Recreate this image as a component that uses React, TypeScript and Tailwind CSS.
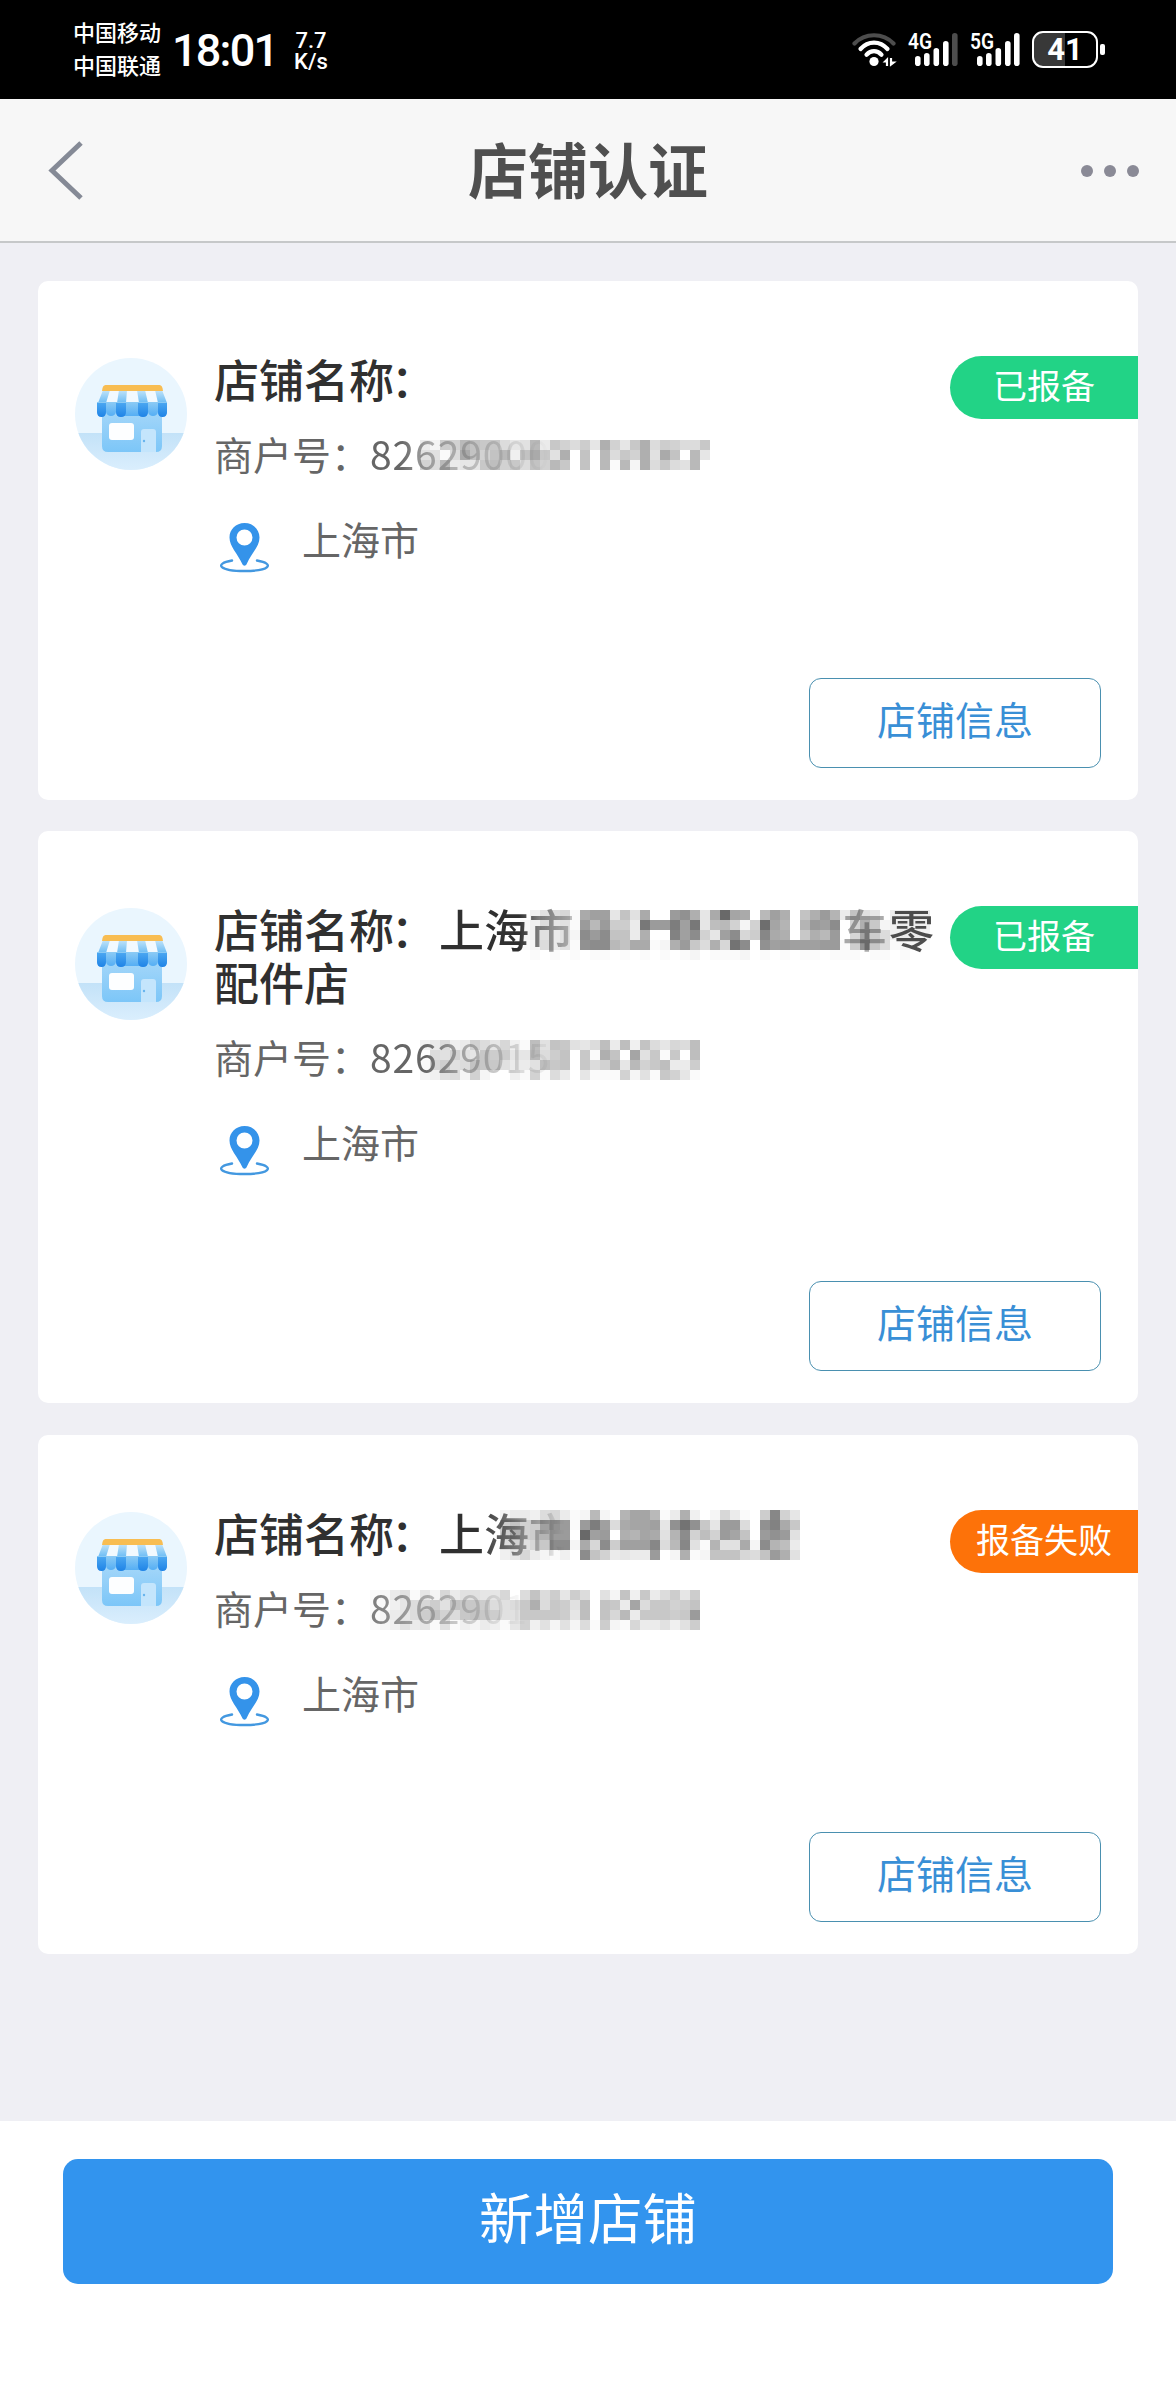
import type { ReactNode } from "react";

/* Each character is the darkness of one 10px cell, in base 36. */
const NUMBER_MASK_1 = [
  "42a9ecbb756e4b97a5g95bg7a977b",
  "6617hc9ce3chb6g0c0e7b9g6hc0e5",
  "97e455bd9b7c9eb0c0e1e2g7b76e0",
];
const NAME_MASK_2 = [
  "036781hjj5c6h00kmg5huih0ejg0cgkf4c6504554",
  "237561kekaa4rkkqjr5de929tif0fkjn09gb23443",
  "236462nkncc4g00pjn95jn8aohg0bgek08ia73442",
  "127461mnnechh12gkb7g8sn0mjkjjjkk1amb71221",
  "01010101101010101201112010101101110110100",
];
const NUMBER_MASK_2 = [
  "34734975831d6cb657d4d3c7587d",
  "076965baa55e7ac0b1gc0i6b1b0d",
  "18a67cbb6446dbc0b79e5e9bd44a",
  "236729200319174051119261b951",
];
const NAME_MASK_3 = [
  "244378412e20fiie14g3028410ao95",
  "ac9ajmk1kqj7hiij5msmb5kk70mphb",
  "ag9afkk0ujk0gfih6fn9d9kic0kmk6",
  "7968bnn2h8najjjo7eo61f66h2nfd4",
  "35842130nc94544k02g12ccc87ckg6",
];
const NUMBER_MASK_3 = [
  "1246152846655807c7a5a7062c3b47a5a",
  "113578a6cbba767bg7ba6d0cb4i7bb9ac",
  "12457ac97bcba66bbbba5d0c8e4bbbabk",
  "12364516132431593626271a21844636a",
];

function Mosaic({ rows, className }: { rows: string[]; className: string }) {
  return (
    <div className={`absolute ${className}`} aria-hidden="true">
      {rows.map((row, y) => (
        <div key={y} className="flex h-[10px]">
          {row.split("").map((c, x) => {
            const g = 255 - 5 * parseInt(c, 36);
            return (
              <span
                key={x}
                className="block h-[10px] w-[10px] shrink-0"
                style={{ backgroundColor: `rgb(${g},${g},${g})` }}
              />
            );
          })}
        </div>
      ))}
    </div>
  );
}

function Signal({ label, dim }: { label: string; dim?: boolean }) {
  const bars = [
    { x: 7, y: 23 },
    { x: 16, y: 20 },
    { x: 25.5, y: 15 },
    { x: 35, y: 8 },
    { x: 44, y: 0 },
  ];
  return (
    <svg width="54" height="44" viewBox="-3 -5 54 44" className="-ml-[3px] -mr-[1px] -mt-[5px]">
      {bars.map((b, i) => (
        <rect
          key={i}
          x={b.x}
          y={b.y + 1}
          width="5.6"
          height={33 - b.y}
          rx="2.8"
          fill={dim && i === 4 ? "#4d4d4d" : "#fff"}
        />
      ))}
      <text
        x="0"
        y="17"
        fill="#fff"
        fontSize="21.5"
        fontWeight="600"
        textLength="24"
        lengthAdjust="spacingAndGlyphs"
        fontFamily="Roboto, sans-serif"
      >
        {label}
      </text>
    </svg>
  );
}

function Wifi() {
  return (
    <svg width="46" height="38" viewBox="0 0 46 38" fill="none" strokeLinecap="round" strokeWidth="4.2">
      <path d="M2.5 11.5C13 .5 31 .5 41.5 11.5" stroke="#4d4d4d" />
      <path d="M8.500 17C16 8.500 28 8.500 35.500 17" stroke="#fff" />
      <path d="M14.500 22.700C19 18 25 18 29.500 22.700" stroke="#fff" />
      <circle cx="22" cy="29.500" r="4.600" fill="#fff" />
      <path d="M35.5 26.500v7h-1v-3.500h-2.500zM38.500 33.500v-7h1v3.500H43z" fill="#fff" stroke="#fff" strokeWidth="1.2" />
    </svg>
  );
}

function StoreIcon() {
  return (
    <svg width="112" height="112" viewBox="0 0 112 112" className="shrink-0">
      <defs>
        <clipPath id="disc">
          <circle cx="56" cy="56" r="56" />
        </clipPath>
        <linearGradient id="body" x1="0" y1="0" x2="0" y2="1">
          <stop offset="0" stopColor="#a3d6f9" />
          <stop offset="1" stopColor="#7cc6f8" />
        </linearGradient>
        <linearGradient id="stripe" x1="0" y1="0" x2="0" y2="1">
          <stop offset="0" stopColor="#c3e4f8" />
          <stop offset="1" stopColor="#6bbcf5" />
        </linearGradient>
        <linearGradient id="light" x1="0" y1="0" x2="0" y2="1">
          <stop offset="0" stopColor="#8ccbf5" />
          <stop offset="1" stopColor="#55aef4" />
        </linearGradient>
        <linearGradient id="dark" x1="0" y1="0" x2="0" y2="1">
          <stop offset="0" stopColor="#4aa6f1" />
          <stop offset="1" stopColor="#1f83e6" />
        </linearGradient>
        <linearGradient id="ground" x1="0" y1="0" x2="0" y2="1">
          <stop offset="0" stopColor="#c3e2f8" />
          <stop offset="1" stopColor="#daeefd" />
        </linearGradient>
      </defs>
      <g clipPath="url(#disc)">
        <rect width="112" height="112" fill="#eaf6fe" />
        <rect y="75" width="112" height="37" fill="url(#ground)" />
      </g>
      <path d="M27 54h60v34q0 6-6 6H33q-6 0-6-6z" fill="url(#body)" />
      <rect x="34" y="65" width="25" height="17" rx="3" fill="#fdfeff" />
      <path d="M66 94V74q0-3 3-3h9q3 0 3 3v20z" fill="#c4e5fc" />
      <circle cx="69" cy="83" r="1.200" fill="#67b4ee" />
      <path d="M28 32h59l5 17H22z" fill="#f2f9fe" />
      <path d="M28 32h7l-4 13h-8zM44 32h8l-1 13h-9zM62 32h8l3 13h-9zM80 32h7l5 13h-9z" fill="url(#stripe)" />
      <path d="M30.500 27h54q3 0 3.500 6H27q.5-6 3.500-6z" fill="#f8bd52" />
      <path d="M22 44h70v9q0 5-4.500 5T83 54q-1 4-5 4t-5-4q-1 4-4 4H46q-4 0-5-4-1 4-5 4t-5-4q-1 4-4.500 4T22 53z" fill="url(#light)" />
      <path d="M22 45h9v9q0 5-4.500 5T22 54zM41 45h10v9q0 5-5 5t-5-5zM63 45h10v9q0 5-5 5t-5-5zM83 45h9v9q0 5-4.500 5T83 54z" fill="url(#dark)" />
    </svg>
  );
}

function Pin() {
  return (
    <svg width="52" height="52" viewBox="0 0 52 52" fill="none">
      <path
        fillRule="evenodd"
        d="M25.500 1C16.800 1 10.500 7.500 10.500 15.500c0 9 8 16 12.800 26.500 1 2.200 3.400 2.200 4.400 0C32.500 31.500 40.500 24.500 40.500 15.500 40.500 7.500 34.200 1 25.500 1zm0 6.500a8 8 0 1 1 0 16 8 8 0 0 1 0-16z"
        fill="#3493ea"
      />
      <path d="M13 38.500C-6 42 1 49 25.500 49S57 42 38 38.500" stroke="#4398e0" strokeWidth="2.400" strokeLinecap="round" />
    </svg>
  );
}

type Store = {
  name: ReactNode;
  merchant: ReactNode;
  status: string;
  failed?: boolean;
};

const nameLabel = (
  <span className="relative">
    店铺名称<span className="-ml-[3px] mr-[3px]">：</span>
  </span>
);

const stores: Store[] = [
  {
    name: nameLabel,
    merchant: (
      <>
        <Mosaic rows={NUMBER_MASK_1} className="left-[206px] top-[15px]" />
        <span className="relative">商户号：</span>
        <span className="relative tracking-[0.9px] [mask-image:linear-gradient(to_right,black_30px,#0008_60px,transparent_180px)]">
          82629000
        </span>
      </>
    ),
    status: "已报备",
  },
  {
    name: (
      <>
        <Mosaic rows={NAME_MASK_2} className="left-[306px] top-[8px]" />
        {nameLabel}
        <span className="relative [mask-image:linear-gradient(to_right,black_80px,#0009_100px,#0004_135px)]">上海市</span>
        <span className="invisible inline-block w-[268px]" />
        <span className="relative mr-[2px] opacity-40">车</span>
        <span className="relative opacity-85">零</span>
        <br />
        配件店
      </>
    ),
    merchant: (
      <>
        <Mosaic rows={NUMBER_MASK_2} className="left-[206px] top-[12px]" />
        <span className="relative">商户号：</span>
        <span className="relative tracking-[0.9px] [mask-image:linear-gradient(to_right,black_55px,#0008_90px,transparent_190px)]">
          82629015
        </span>
      </>
    ),
    status: "已报备",
  },
  {
    name: (
      <>
        <Mosaic rows={NAME_MASK_3} className="left-[286px] top-[4px]" />
        {nameLabel}
        <span className="relative [mask-image:linear-gradient(to_right,black_40px,#0009_75px,transparent_125px)]">上海市</span>
      </>
    ),
    merchant: (
      <>
        <Mosaic rows={NUMBER_MASK_3} className="left-[156px] top-[11px]" />
        <span className="relative">商户号：</span>
        <span className="relative tracking-[0.9px] [mask-image:linear-gradient(to_right,#000d,#0008_45px,transparent_160px)]">
          8262901
        </span>
      </>
    ),
    status: "报备失败",
    failed: true,
  },
];

function StoreCard({ store }: { store: Store }) {
  return (
    <section className="relative rounded-[10px] bg-white px-[37px] pb-[32px] pt-[71px] last:mt-px">
      <div className="flex">
        <div className="pt-[6px]">
          <StoreIcon />
        </div>
        <div className="ml-[27px] whitespace-nowrap">
          <h2 className="relative text-[45px] font-medium leading-[53px] text-[#303030]">{store.name}</h2>
          <p className="relative mt-[20px] h-[56px] text-[39px] leading-[56px] text-[#666]">{store.merchant}</p>
          <div className="mt-[29px] flex h-[56px] items-center">
            <div className="ml-[5px] pt-[20px]">
              <Pin />
            </div>
            <span className="ml-[31px] text-[39px] leading-[56px] text-[#666]">上海市</span>
          </div>
        </div>
      </div>
      <span
        className={`absolute right-0 top-[75px] flex h-[63px] w-[188px] items-center justify-center rounded-l-full pb-[6px] text-[34px] leading-none text-white ${
          store.failed ? "bg-[#fd7209]" : "bg-[#22d386]"
        }`}
      >
        {store.status}
      </span>
      <button className="ml-auto mt-[112px] flex h-[90px] w-[292px] items-center justify-center rounded-[12px] border border-[#4a90b0] pb-[9px] text-[39px] leading-none text-[#398fd6]">
        店铺信息
      </button>
    </section>
  );
}

export default function App() {
  return (
    <div className="flex h-[2400px] w-[1176px] flex-col overflow-hidden bg-[#efeff4] font-['Noto_Sans_CJK_SC',sans-serif]">
      <div className="flex h-[99px] shrink-0 items-start bg-black text-white">
        <div className="ml-[73px] mt-[15px] text-[22px] font-medium leading-[33px]">
          <div>中国移动</div>
          <div>中国联通</div>
        </div>
        <div className="ml-[11px] mt-[26px] w-[106px] font-['Roboto'] text-[45px] font-medium leading-[50px] tracking-[-1.8px]">
          18:01
        </div>
        <div className="ml-[15px] mt-[30px] w-[36px] text-center font-['Roboto'] text-[22px] font-medium leading-[21px]">
          <div>7.7</div>
          <div>K/s</div>
        </div>
        <div className="ml-auto mr-[71px] mt-[32px] flex items-start">
          <Wifi />
          <div className="ml-[10px]">
            <Signal label="4G" dim />
          </div>
          <div className="ml-[12px]">
            <Signal label="5G" />
          </div>
          <div className="ml-[12px] -mt-px flex items-center">
            <div className="flex h-[37px] w-[66px] items-center justify-center rounded-[11px] border-[2.5px] border-white bg-[linear-gradient(to_right,#383838_50%,black_50%)] font-['Roboto'] text-[31px] font-bold leading-none">
              41
            </div>
            <div className="ml-[2px] h-[11px] w-[5px] rounded-[2px] bg-white" />
          </div>
        </div>
      </div>

      <header className="flex h-[144px] shrink-0 items-center border-b-2 border-[#c6c8c9] bg-[#f7f7f7] pl-[48px] pr-[37px]">
        <svg width="60" height="60" viewBox="0 0 60 60" fill="none">
          <path d="M33 3L4 30.500L33 58" stroke="#858a96" strokeWidth="5" />
        </svg>
        <h1 className="ml-[360px] pb-[4px] text-[60px] font-bold leading-none text-[#4f4f4f]">店铺认证</h1>
        <div className="ml-auto flex gap-[11px] pt-[2px]">
          <span className="h-[12px] w-[12px] rounded-full bg-[#8a8a96]" />
          <span className="h-[12px] w-[12px] rounded-full bg-[#8a8a96]" />
          <span className="h-[12px] w-[12px] rounded-full bg-[#8a8a96]" />
        </div>
      </header>

      <main className="flex flex-1 flex-col gap-[31px] px-[38px] pt-[38px]">
        {stores.map((store, i) => (
          <StoreCard key={i} store={store} />
        ))}
      </main>

      <footer className="h-[279px] shrink-0 bg-white px-[63px] pt-[38px]">
        <button className="flex h-[125px] w-full items-center justify-center rounded-[15px] bg-[#3294ee] pb-[10px] text-[54.5px] leading-none text-white">
          新增店铺
        </button>
      </footer>
    </div>
  );
}
